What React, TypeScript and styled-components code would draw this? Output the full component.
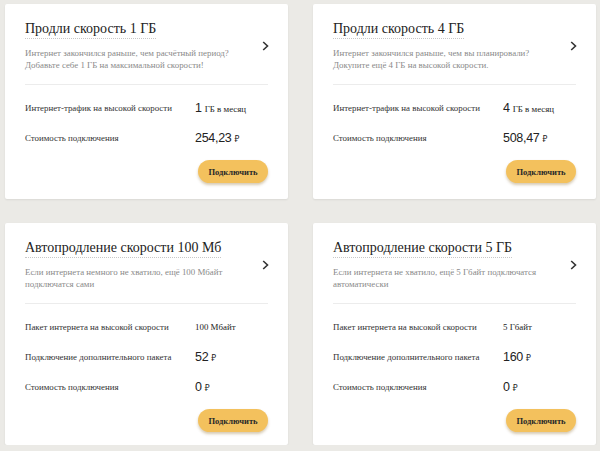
import React from 'react';
import styled, { createGlobalStyle } from 'styled-components';

const GlobalStyle = createGlobalStyle`
  html, body {
    margin: 0;
    padding: 0;
    background: #ebeae6;
  }
  body {
    font-family: "Liberation Serif", "DejaVu Serif", serif;
    color: #333;
  }
`;

const Grid = styled.div`
  display: grid;
  grid-template-columns: 283px 283px;
  grid-template-rows: 195px 222px;
  column-gap: 25px;
  row-gap: 24px;
  padding: 4px 0 0 5px;
`;

const Card = styled.div`
  background: #fff;
  border-radius: 2px;
  box-shadow: 0 1px 2px rgba(0, 0, 0, 0.08);
  padding: 16px 20px 0;
  display: flex;
  flex-direction: column;
`;

const Header = styled.div`
  display: flex;
  align-items: center;
  justify-content: space-between;
  padding-bottom: 13px;
  border-bottom: 1px solid #ececec;
`;

const HeaderText = styled.div`
  display: flex;
  flex-direction: column;
  align-items: flex-start;
`;

const Title = styled.div`
  font-size: 14px;
  line-height: 18px;
  color: #222;
  border-bottom: 1px dotted #c8c8c8;
  white-space: nowrap;
`;

const Description = styled.div`
  margin-top: 8px;
  font-size: 8.9px;
  line-height: 12px;
  color: #8a8a8a;
  white-space: nowrap;
`;

const Chevron = styled.svg`
  flex: none;
  width: 7px;
  height: 10px;
  margin-right: -1px;
`;

const Rows = styled.div`
  margin-top: 8px;
  display: flex;
  flex-direction: column;
`;

const Row = styled.div`
  display: grid;
  grid-template-columns: 170px 1fr;
  align-items: center;
  height: 30px;
`;

const Label = styled.div`
  font-size: 8.9px;
  color: #333;
  white-space: nowrap;
`;

const Value = styled.div<{ $big?: boolean }>`
  font-family: ${({ $big }) =>
    $big ? '"Liberation Sans", "Noto Sans", sans-serif' : '"Liberation Serif", serif'};
  font-size: ${({ $big }) => ($big ? '12.5px' : '8.9px')};
  letter-spacing: ${({ $big }) => ($big ? '-0.3px' : '0')};
  color: #222;
  white-space: nowrap;
`;

const Small = styled.span`
  font-family: "Liberation Serif", serif;
  font-size: 8.9px;
  letter-spacing: 0;
  margin-left: 3px;
`;

const Rub = styled.span`
  font-size: 8.5px;
  letter-spacing: 0;
  margin-left: 3px;
`;

const Footer = styled.div`
  display: flex;
  justify-content: flex-end;
  margin-top: 7px;
`;

const Button = styled.button`
  width: 70px;
  height: 23px;
  border: none;
  border-radius: 12px;
  background: #f3c15d;
  box-shadow: 0 2px 3px rgba(120, 80, 0, 0.3);
  font-family: "Liberation Serif", serif;
  font-size: 8.5px;
  font-weight: bold;
  color: #2a2a2a;
  padding: 0;
  cursor: pointer;
`;

type Item = {
  label: string;
  value: React.ReactNode;
};

type Offer = {
  title: string;
  description: string[];
  rows: Item[];
};

const price = (amount: string) => (
  <Value $big>
    {amount}
    <Rub>₽</Rub>
  </Value>
);

const offers: Offer[] = [
  {
    title: 'Продли скорость 1 ГБ',
    description: ['Интернет закончился раньше, чем расчётный период?', 'Добавьте себе 1 ГБ на максимальной скорости!'],
    rows: [
      {
        label: 'Интернет-трафик на высокой скорости',
        value: (
          <Value $big>
            1<Small>ГБ в месяц</Small>
          </Value>
        ),
      },
      { label: 'Стоимость подключения', value: price('254,23') },
    ],
  },
  {
    title: 'Продли скорость 4 ГБ',
    description: ['Интернет закончился раньше, чем вы планировали?', 'Докупите ещё 4 ГБ на высокой скорости.'],
    rows: [
      {
        label: 'Интернет-трафик на высокой скорости',
        value: (
          <Value $big>
            4<Small>ГБ в месяц</Small>
          </Value>
        ),
      },
      { label: 'Стоимость подключения', value: price('508,47') },
    ],
  },
  {
    title: 'Автопродление скорости 100 Мб',
    description: ['Если интернета немного не хватило, ещё 100 Мбайт', 'подключатся сами'],
    rows: [
      { label: 'Пакет интернета на высокой скорости', value: <Value>100 Мбайт</Value> },
      { label: 'Подключение дополнительного пакета', value: price('52') },
      { label: 'Стоимость подключения', value: price('0') },
    ],
  },
  {
    title: 'Автопродление скорости 5 ГБ',
    description: ['Если интернета не хватило, ещё 5 Гбайт подключатся', 'автоматически'],
    rows: [
      { label: 'Пакет интернета на высокой скорости', value: <Value>5 Гбайт</Value> },
      { label: 'Подключение дополнительного пакета', value: price('160') },
      { label: 'Стоимость подключения', value: price('0') },
    ],
  },
];

const App = () => (
  <>
    <GlobalStyle />
    <Grid>
      {offers.map((offer) => (
        <Card key={offer.title}>
          <Header>
            <HeaderText>
              <Title>{offer.title}</Title>
              <Description>
                {offer.description.map((line) => (
                  <div key={line}>{line}</div>
                ))}
              </Description>
            </HeaderText>
            <Chevron viewBox="0 0 7 10">
              <path d="M1.2 1 L5.5 5 L1.2 9" fill="none" stroke="#333" strokeWidth="1.6" />
            </Chevron>
          </Header>
          <Rows>
            {offer.rows.map((row) => (
              <Row key={row.label}>
                <Label>{row.label}</Label>
                {row.value}
              </Row>
            ))}
          </Rows>
          <Footer>
            <Button>Подключить</Button>
          </Footer>
        </Card>
      ))}
    </Grid>
  </>
);

export default App;
